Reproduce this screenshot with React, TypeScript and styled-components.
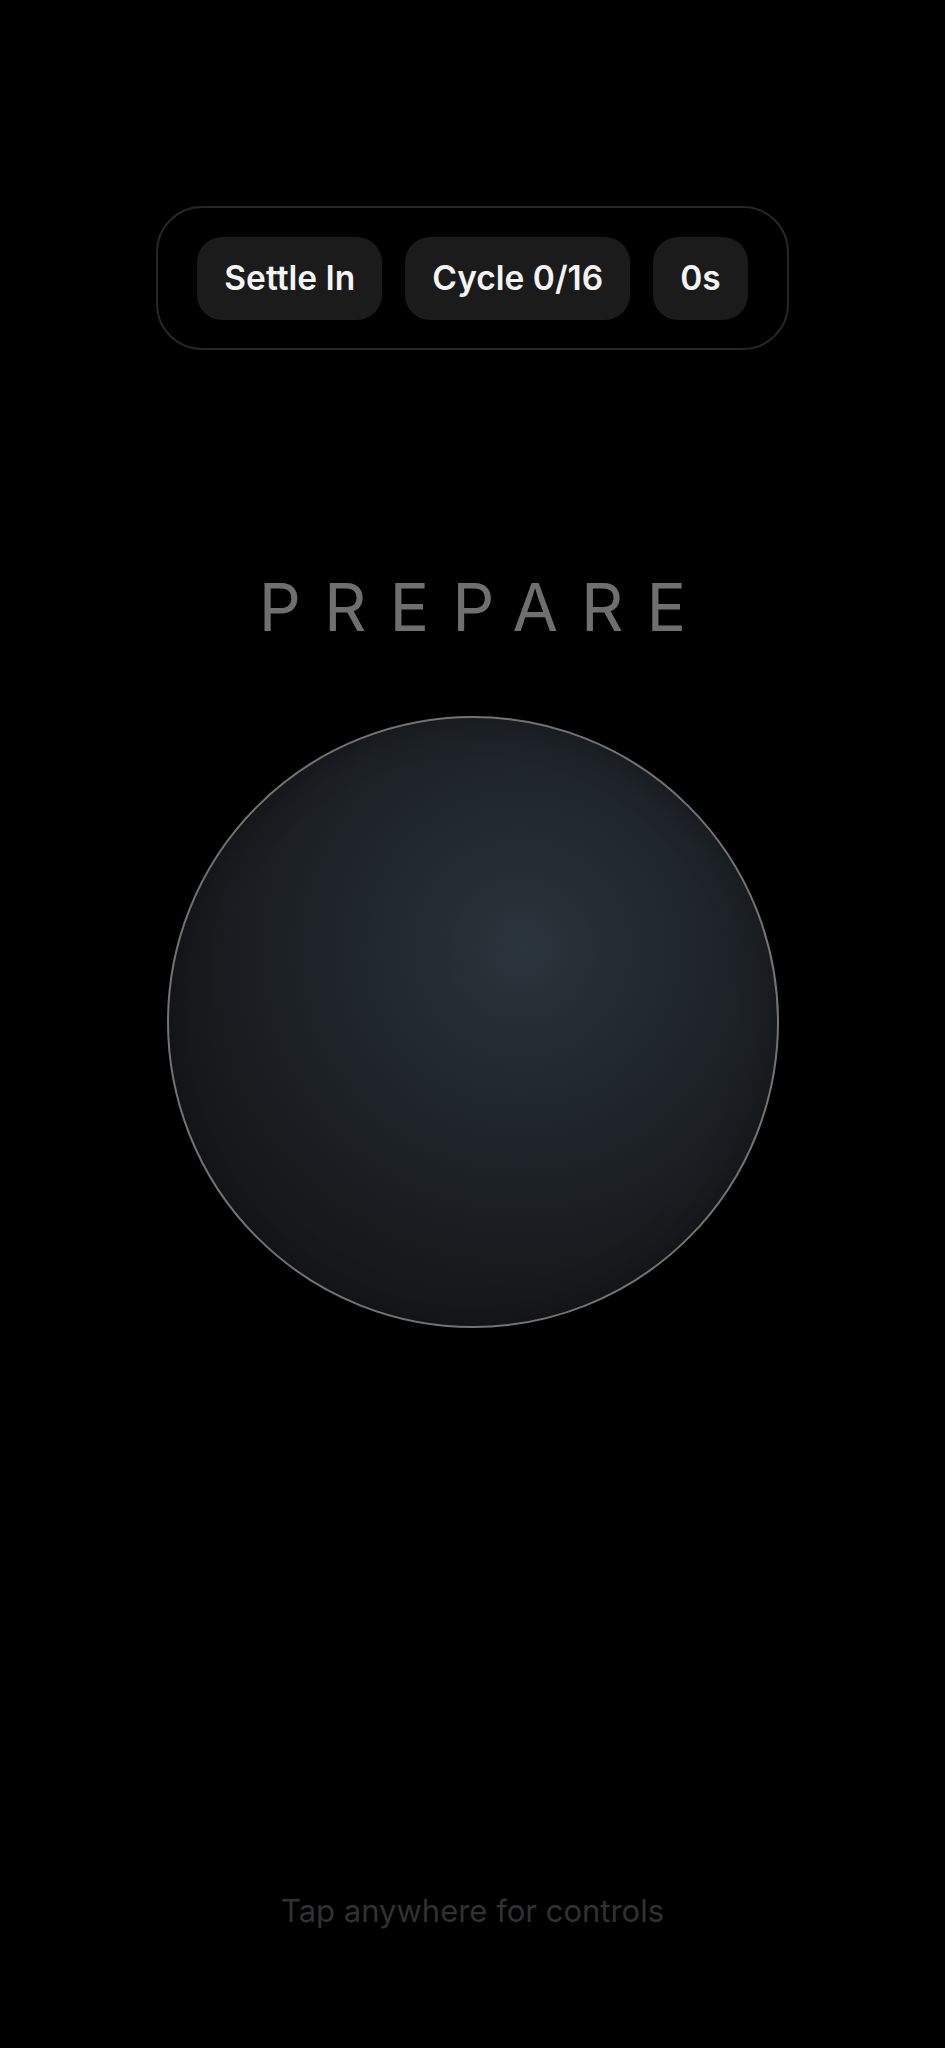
import * as React from 'react';
import styled, { createGlobalStyle } from 'styled-components';

const GlobalStyle = createGlobalStyle`
  html, body {
    margin: 0;
    padding: 0;
    background: #000;
  }
  body {
    font-family: Inter, "Noto Sans", "Liberation Sans", sans-serif;
    -webkit-font-smoothing: antialiased;
  }
  * {
    box-sizing: border-box;
  }
`;

const stats: string[] = ['Settle In', 'Cycle 0/16', '0s'];

const App: React.FunctionComponent = (): React.ReactElement => (
  <React.Fragment>
    <GlobalStyle />
    <Screen>
      <StatusBar>
        {stats.map((label) => (
          <StatPill key={label}>{label}</StatPill>
        ))}
      </StatusBar>
      <PhaseLabel>PREPARE</PhaseLabel>
      <Orb />
      <Hint>Tap anywhere for controls</Hint>
    </Screen>
  </React.Fragment>
);

export default App;

// Styled components

const Screen = styled('main')`
  align-items: center;
  background: #000;
  display: flex;
  flex-direction: column;
  min-height: 2048px;
  padding: 206px 0 119px;
  width: 100%;
`;

const StatusBar = styled('div')`
  align-items: center;
  border: 2px solid #262626;
  border-radius: 46px;
  display: flex;
  gap: 23px;
  height: 144px;
  padding: 0 39px;
`;

const StatPill = styled('div')`
  align-items: center;
  background: #1b1b1b;
  border-radius: 25px;
  color: #f4f4f4;
  display: flex;
  font-size: 33.5px;
  font-weight: 600;
  height: 83px;
  padding: 0 27px;
  white-space: nowrap;
`;

const PhaseLabel = styled('h1')`
  color: #6f6f6f;
  font-size: 66px;
  font-weight: 400;
  letter-spacing: 23px;
  line-height: 80px;
  margin: 217px 0 0;
  padding-left: 23px;
`;

const Orb = styled('div')`
  background: radial-gradient(
    circle at 58% 38%,
    #2b353d 0%,
    #252d34 16%,
    #1e2429 38%,
    #17191c 66%,
    #131415 100%
  );
  border: 2px solid #737373;
  border-radius: 50%;
  box-shadow: inset 0 0 36px rgba(0, 0, 0, 0.3);
  height: 612px;
  margin-top: 69px;
  width: 612px;
`;

const Hint = styled('p')`
  color: #313131;
  font-size: 31px;
  font-weight: 400;
  line-height: 36px;
  margin: auto 0 0;
`;
